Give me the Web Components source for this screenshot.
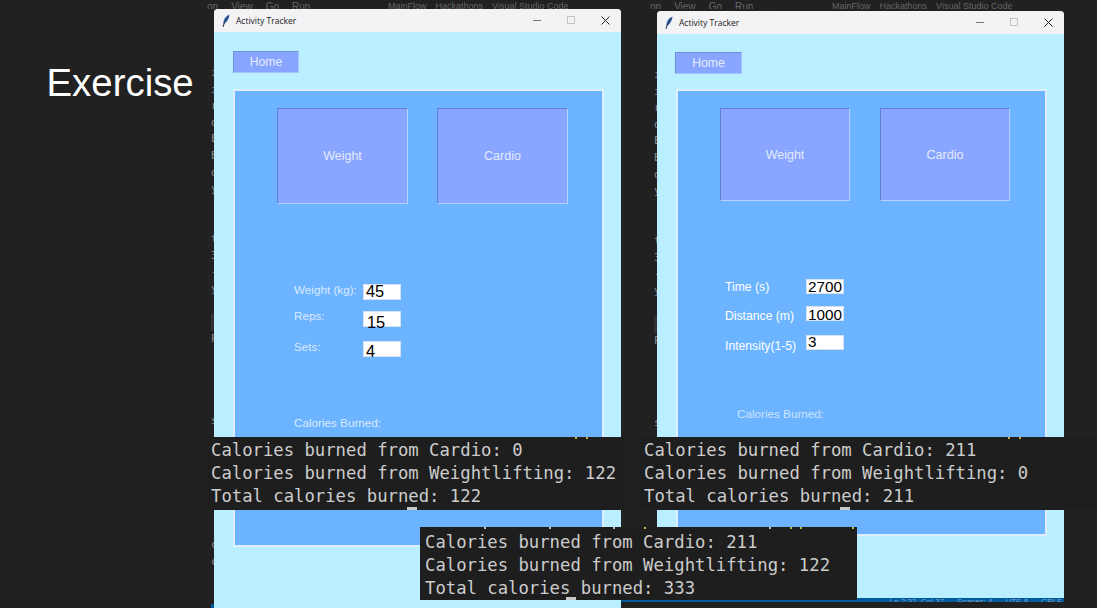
<!DOCTYPE html>
<html><head><meta charset="utf-8"><title>Exercise</title>
<style>
html,body{margin:0;padding:0;background:#212121;overflow:hidden}
body{width:1097px;height:608px;position:relative;font-family:"Liberation Sans",Arial,sans-serif}
slide-title{left:46.5px;top:61px}
vs-backdrop{left:0;top:0}
#w1{left:214px;top:9px;width:407px;height:599px;--home-m:19px 0 0 19px;--home-w:66px;--panel-mt:16px;--panel-ml:19px;--panel-w:371px;--panel-h:458px;--btn-w:131px;--btn-h:96px;--btn-gap:29px;--btn-pl:42px}
#w2{left:657px;top:11px;width:407px;height:587px;--home-m:18px 0 0 18px;--home-w:67px;--panel-mt:15px;--panel-ml:19px;--panel-w:371px;--panel-h:447px;--btn-w:130px;--btn-h:93px;--btn-gap:30px;--btn-pl:42px}
#c1{left:208px;top:437px;width:417px;--cursor-x:199px;--text-x:3px;--text-y:2px}
#c2{left:640px;top:437px;width:457px;--cursor-x:200px;--text-x:4px;--text-y:2px}
#c3{left:420px;top:527px;width:437px;--cursor-x:146px;--text-x:5px;--text-y:4px}
</style></head>
<body>
<template id="t-back"><style>
:host{position:absolute;display:block;width:1097px;height:608px;overflow:hidden;color:#8b8f94;font:12px/14px "Liberation Sans",sans-serif}
.menu{position:absolute;top:0;height:9px;overflow:hidden;white-space:nowrap;display:flex;gap:13px;font-size:10px;line-height:13px;color:#666}
.menu.r{gap:9px;font-size:9px}
.col{position:absolute;display:flex;flex-direction:column;font:11px/16.6px "DejaVu Sans Mono",monospace;color:#85898e;width:8px;overflow:hidden}
.col span{height:16.6px;display:block}
.hl{background:#333;}
.status{position:absolute;left:590px;top:598px;width:474px;height:4px;background:#005a9e;overflow:hidden}
.status p{margin:0;position:absolute;right:2px;top:-1px;display:flex;gap:13px;font-size:8px;line-height:10px;color:#7fa6c8;white-space:nowrap}
.tick{position:absolute;left:211px;top:604px;width:3px;height:4px;background:#005a9e}
</style>
<div class="menu" style="left:207px"><span>on</span><span>View</span><span>Go</span><span>Run</span><span>...</span></div>
<div class="menu r" style="left:388px"><span>MainFlow</span><span>Hackathons</span><span>Visual Studio Code</span></div>
<div class="menu" style="left:650px"><span>on</span><span>View</span><span>Go</span><span>Run</span><span>...</span></div>
<div class="menu r" style="left:832px"><span>MainFlow</span><span>Hackathons</span><span>Visual Studio Code</span></div>
<div class="col" id="a" style="left:211px;top:65px"></div>
<div class="col" id="a2" style="left:211px;top:537px"></div>
<div class="col" id="b" style="left:654px;top:67px"></div>
<div class="status"><p><span>Ln 2:32, Col 37</span><span>Spaces: 4</span><span>UTF-8</span><span>CRLF</span></p></div>
<div class="tick"></div>
</template>

<template id="t-title"><style>
:host{position:absolute;display:block;font:38.4px/44px "Liberation Sans",Arial,sans-serif;color:#fff;white-space:nowrap}
</style><slot></slot></template>

<template id="t-win"><style>
:host{position:absolute;display:flex;flex-direction:column;background:#b9efff;overflow:hidden;border-radius:4px 4px 0 0;font-family:"Liberation Sans",Arial,sans-serif}
.bar{flex:none;height:23px;background:#f3f3f5;display:flex;align-items:center;color:#1a1a1a}
.icon{margin-left:7px;width:10px;height:14px;flex:none}
.name{margin-left:5px;font:8.5px/12px "Open Sans","Noto Sans",sans-serif;white-space:nowrap;flex:1}
.ctl{flex:none;width:34px;height:23px;display:flex;align-items:center;justify-content:center}
.ctls{display:flex;margin-right:-1px}
.home{margin:var(--home-m);width:var(--home-w);flex:none}
.panel{box-sizing:border-box;margin:var(--panel-mt) 0 0 var(--panel-ml);width:var(--panel-w);height:var(--panel-h);flex:none;background:#6cb4ff;border:2px solid #dfeeff;padding:17px 0 0 var(--btn-pl)}
.btns{display:flex;gap:var(--btn-gap)}
</style>
<div class="bar">
<svg class="icon" viewBox="0 0 10 14"><path d="M8.6.6C5.6 1.4 3.2 4 2.6 7.2L2.1 10l1.6-.8c2.6-1 4.4-4.2 4.9-8.6z" fill="#3f6fb5"/><path d="M7.6 2C5.6 4.2 3.8 7.2 2 12.9" fill="none" stroke="#1b2a44" stroke-width="1"/></svg>
<span class="name">Activity Tracker</span>
<div class="ctls">
<div class="ctl"><svg width="9" height="9"><path d="M0 4.5h8" stroke="#777" stroke-width="1"/></svg></div>
<div class="ctl"><svg width="9" height="9"><rect x=".5" y=".5" width="7" height="7" fill="none" stroke="#c4c4c4"/></svg></div>
<div class="ctl"><svg width="9" height="9"><path d="M.5.5l8 8M8.5.5l-8 8" stroke="#222" stroke-width="1"/></svg></div>
</div></div>
<tk-button class="home" style="--h:22px;--fs:12.2px;--tl:#6d8fd6;--br:#a6c4ff;--bw:1px">Home</tk-button>
<div class="panel"><div class="btns"><slot name="buttons"></slot></div><slot></slot></div>
</template>

<template id="t-btn"><style>
:host{display:flex;box-sizing:border-box;height:var(--h,96px);width:var(--w,auto);align-items:center;justify-content:center;background:#88a5ff;color:#e4ebff;font:var(--fs,12.5px)/14px "Liberation Sans",Arial,sans-serif;border-style:solid;border-width:var(--bw,1px);border-color:var(--tl,#5f82c9) var(--br,#b4d2ff) var(--br,#b4d2ff) var(--tl,#5f82c9)}
</style><slot></slot></template>

<template id="t-form"><style>
:host{display:flex;flex-direction:column;margin:var(--form-mt) 0 0 var(--form-ml)}
</style><slot></slot></template>

<template id="t-field"><style>
:host{display:grid;grid-template-columns:var(--lab-w) 38px;height:var(--fh,16px);margin-top:var(--mt,0);color:var(--lab-c,#dbe9ff);font:var(--lab-fs,11.7px)/14px "Liberation Sans",Arial,sans-serif}
.l{white-space:nowrap;margin-top:var(--lab-dy,-2px)}
.v{box-sizing:border-box;height:var(--fh,16px);width:38px;background:#fff;border:1px solid #d5e2f2;color:#000;font:var(--val-fs,16.4px)/12px "Liberation Sans",Arial,sans-serif;padding:var(--dy,0) 0 0 var(--dx,2px);white-space:nowrap}
</style><span class="l"></span><div class="v"></div></template>

<template id="t-out"><style>
:host{display:block;color:var(--out-c,#dbe9ff);font:11.7px/14px "Liberation Sans",Arial,sans-serif;margin:var(--out-mt) 0 0 var(--out-ml);white-space:nowrap}
</style><slot></slot></template>

<template id="t-con"><style>
:host{position:absolute;display:block;box-sizing:border-box;height:73px;background:#1e1e1e;color:#cccccc;font:17.25px/23px "DejaVu Sans Mono","Liberation Mono",monospace;padding:var(--text-y) 0 0 var(--text-x);white-space:pre;overflow:visible}
.cursor{position:absolute;left:var(--cursor-x);bottom:0;width:10px;height:3px;background:#c8c8c8}
.mark{position:absolute;top:0;width:2px;height:2px}
div{height:23px}
</style><div><slot name="a"></slot></div><div><slot name="b"></slot></div><div><slot name="c"></slot></div><span class="cursor"></span></template>

<slide-title>Exercise</slide-title>
<vs-backdrop></vs-backdrop>

<app-window id="w1">
  <tk-button slot="buttons" style="--w:131px;--h:96px">Weight</tk-button>
  <tk-button slot="buttons" style="--w:131px;--h:96px">Cardio</tk-button>
  <tk-form style="--form-mt:80px;--form-ml:17px;--lab-w:69px">
    <tk-field label="Weight (kg):" value="45" style="--dy:0px;--lab-dy:-1px"></tk-field>
    <tk-field label="Reps:" value="15" style="--mt:11px;--dy:4px;--dx:3px"></tk-field>
    <tk-field label="Sets:" value="4" style="--mt:14px;--dy:3px;--lab-dy:-1px"></tk-field>
  </tk-form>
  <tk-output style="--out-mt:59px;--out-ml:17px">Calories Burned:</tk-output>
</app-window>

<app-window id="w2">
  <tk-button slot="buttons" style="--w:130px;--h:93px">Weight</tk-button>
  <tk-button slot="buttons" style="--w:130px;--h:93px">Cardio</tk-button>
  <tk-form style="--form-mt:78px;--form-ml:5px;--lab-w:81px;--lab-c:#fff;--lab-fs:12.2px;--val-fs:15.3px;--fh:15px">
    <tk-field label="Time (s)" value="2700" style="--dy:1px;--lab-dy:1px;--dx:1px"></tk-field>
    <tk-field label="Distance (m)" value="1000" style="--mt:12px;--dy:2px;--lab-dy:3px;--dx:1px"></tk-field>
    <tk-field label="Intensity(1-5)" value="3" style="--mt:14px;--dy:0px;--lab-dy:4px;--dx:1px"></tk-field>
  </tk-form>
  <tk-output style="--out-mt:57px;--out-ml:17px;--out-c:#cfe3ff">Calories Burned:</tk-output>
</app-window>

<term-output id="c1" data-marks="367:#c9b23a,378:#c9b23a"><span slot="a">Calories burned from Cardio: 0</span><span slot="b">Calories burned from Weightlifting: 122</span><span slot="c">Total calories burned: 122</span></term-output>
<term-output id="c2" data-marks="368:#c9b23a,379:#c9b23a"><span slot="a">Calories burned from Cardio: 211</span><span slot="b">Calories burned from Weightlifting: 0</span><span slot="c">Total calories burned: 211</span></term-output>
<term-output id="c3" data-marks="64:#bbbbbb,129:#bbbbbb,193:#bbbbbb,224:#c9b23a,349:#bbbbbb,370:#c9b23a,380:#c9b23a,432:#c9b23a"><span slot="a">Calories burned from Cardio: 211</span><span slot="b">Calories burned from Weightlifting: 122</span><span slot="c">Total calories burned: 333</span></term-output>

<script>
function base(id){return class extends HTMLElement{constructor(){super();this.attachShadow({mode:'open'}).appendChild(document.getElementById(id).content.cloneNode(true));}}}
customElements.define('tk-button',base('t-btn'));
customElements.define('slide-title',base('t-title'));
customElements.define('app-window',base('t-win'));
customElements.define('tk-form',base('t-form'));
customElements.define('tk-output',base('t-out'));
customElements.define('term-output',class extends base('t-con'){connectedCallback(){
 (this.dataset.marks||'').split(',').filter(Boolean).forEach(m=>{const [x,c]=m.split(':');const e=document.createElement('span');e.className='mark';e.style.left=x+'px';e.style.background=c;this.shadowRoot.appendChild(e);});
}});
customElements.define('tk-field',class extends base('t-field'){connectedCallback(){this.shadowRoot.querySelector('.l').textContent=this.getAttribute('label');this.shadowRoot.querySelector('.v').textContent=this.getAttribute('value');}});
customElements.define('vs-backdrop',class extends base('t-back'){connectedCallback(){
 const fill=(id,s)=>{const c=this.shadowRoot.getElementById(id);s.split('|').forEach(x=>{const e=document.createElement('span');e.textContent=x==='#'?'':x;if(x==='#')e.className='hl';c.appendChild(e);});};
 const s='i|i|r|d|E|B|d|y|||t|3|-|y||#|P|||||s';
 fill('a',s);fill('b',s);fill('a2','c|c');
}});
</script>
</body></html>
